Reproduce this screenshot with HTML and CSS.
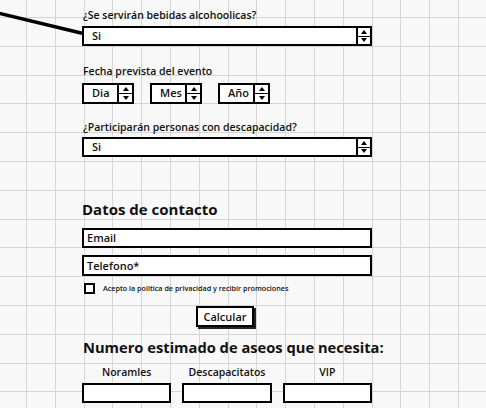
FILE: index.html
```html
<!DOCTYPE html>
<html lang="es">
<head>
<meta charset="utf-8">
<title>Formulario</title>
<link rel="stylesheet" href="styles.css">
</head>
<body>
<svg class="connector" width="84" height="40" viewBox="0 0 84 40" aria-hidden="true">
  <line x1="-2" y1="13" x2="81" y2="33" stroke="#000" stroke-width="3.5" stroke-linecap="round"/>
</svg>
<main class="form">
  <div class="lbl lbl-first">¿Se servirán bebidas alcohoolicas?</div>
  <div class="select select-a">
    <span class="value">Si</span>
    <span class="spin"><span class="arrow up"></span><span class="arrow down"></span></span>
  </div>

  <div class="lbl lbl-date">Fecha prevista del evento</div>
  <div class="dates">
    <div class="select small">
      <span class="value">Dia</span>
      <span class="spin"><span class="arrow up"></span><span class="arrow down"></span></span>
    </div>
    <div class="select small">
      <span class="value">Mes</span>
      <span class="spin"><span class="arrow up"></span><span class="arrow down"></span></span>
    </div>
    <div class="select small">
      <span class="value">Año</span>
      <span class="spin"><span class="arrow up"></span><span class="arrow down"></span></span>
    </div>
  </div>

  <div class="lbl lbl-third">¿Participarán personas con descapacidad?</div>
  <div class="select select-b">
    <span class="value">Si</span>
    <span class="spin"><span class="arrow up"></span><span class="arrow down"></span></span>
  </div>

  <h2 class="heading heading-contact">Datos de contacto</h2>
  <div class="input input-email">Email</div>
  <div class="input input-tel">Telefono*</div>
  <div class="check-row">
    <span class="checkbox"></span>
    <span class="check-text">Acepto la politica de privacidad y recibir promociones</span>
  </div>
  <div class="btn-row"><span class="button">Calcular</span></div>

  <h2 class="heading heading-aseos">Numero estimado de aseos que necesita:</h2>
  <div class="cols">
    <div class="col-label">Noramles</div>
    <div class="col-label">Descapacitatos</div>
    <div class="col-label">VIP</div>
    <div class="box"></div>
    <div class="box"></div>
    <div class="box"></div>
  </div>
</main>
</body>
</html>
```
FILE: styles.css
```css
html, body {
  margin: 0;
  padding: 0;
}
body {
  width: 486px;
  height: 408px;
  overflow: hidden;
  position: relative;
  background-color: #f8f8f8;
  background-image:
    repeating-linear-gradient(to right, transparent 0 26px, #d6d6d6 26px 27px, transparent 27px 28.8px),
    repeating-linear-gradient(to bottom, transparent 0 17px, #d6d6d6 17px 18px, transparent 18px 28.8px);
  font-family: "Open Sans", "DejaVu Sans", sans-serif;
  color: #111;
}
.connector {
  position: absolute;
  left: 0;
  top: 0;
}
.form {
  padding: 8px 0 0 82px;
  width: 290px;
}
.lbl {
  font-size: 10.5px;
  font-weight: 600;
  line-height: 14px;
  height: 14px;
  padding-left: 1px;
  white-space: nowrap;
}
.lbl-first { margin-bottom: 4px; }
.lbl-date { margin-bottom: 5px; }
.lbl-third { margin-bottom: 3px; }

.select {
  box-sizing: border-box;
  display: flex;
  height: 20px;
  border: 2px solid #000;
  background: #fff;
}
.select-a { margin-bottom: 18px; }
.select-b { margin-bottom: 42px; }
.value {
  flex: 1;
  padding-left: 8px;
  font-size: 11px;
  font-weight: 600;
  line-height: 16px;
}
.spin {
  width: 12px;
  border-left: 2px solid #000;
  display: flex;
  flex-direction: column;
}
.arrow {
  flex: 1;
  display: flex;
  align-items: center;
  justify-content: center;
}
.arrow.up { border-bottom: 1px solid #000; }
.arrow.up::before {
  content: "";
  border-left: 3px solid transparent;
  border-right: 3px solid transparent;
  border-bottom: 4px solid #000;
}
.arrow.down::before {
  content: "";
  border-left: 3px solid transparent;
  border-right: 3px solid transparent;
  border-top: 4px solid #000;
}

.dates {
  display: flex;
  gap: 16px;
  margin-bottom: 16px;
}
.select.small {
  width: 52px;
  height: 21px;
}
.select.small .spin { width: 13px; }

.heading {
  margin: 0;
  font-size: 15px;
  font-weight: 700;
  line-height: 20px;
  height: 20px;
  white-space: nowrap;
}
.heading-contact { margin-bottom: 9px; }
.heading-aseos { margin-bottom: 8px; padding-left: 1px; font-size: 14.7px; }

.input {
  box-sizing: border-box;
  height: 20px;
  border: 2px solid #000;
  background: #fff;
  padding-left: 3px;
  font-size: 11px;
  font-weight: 600;
  line-height: 16px;
}
.input-email { margin-bottom: 7px; }
.input-tel { height: 21px; margin-bottom: 6px; line-height: 17px; }

.check-row {
  display: flex;
  align-items: center;
  height: 12px;
  margin-bottom: 12px;
  padding-left: 2px;
}
.checkbox {
  box-sizing: border-box;
  width: 11px;
  height: 11px;
  border: 2px solid #000;
  background: #fff;
  margin-right: 8px;
}
.check-text {
  font-size: 7.2px;
  font-weight: 600;
  line-height: 10px;
  white-space: nowrap;
}

.btn-row {
  display: flex;
  justify-content: center;
  margin-bottom: 10px;
  padding-right: 4px;
}
.button {
  box-sizing: border-box;
  width: 58px;
  height: 21px;
  border: 2px solid #000;
  background: #fff;
  box-shadow: 2px 2px 0 #222;
  font-size: 11px;
  font-weight: 600;
  line-height: 17px;
  text-align: center;
}

.cols {
  display: grid;
  grid-template-columns: repeat(3, 1fr);
  column-gap: 11px;
  row-gap: 4px;
}
.col-label {
  font-size: 10.5px;
  font-weight: 600;
  line-height: 14px;
  height: 14px;
  text-align: center;
}
.box {
  box-sizing: border-box;
  height: 20px;
  border: 2px solid #000;
  background: #fff;
}
```
